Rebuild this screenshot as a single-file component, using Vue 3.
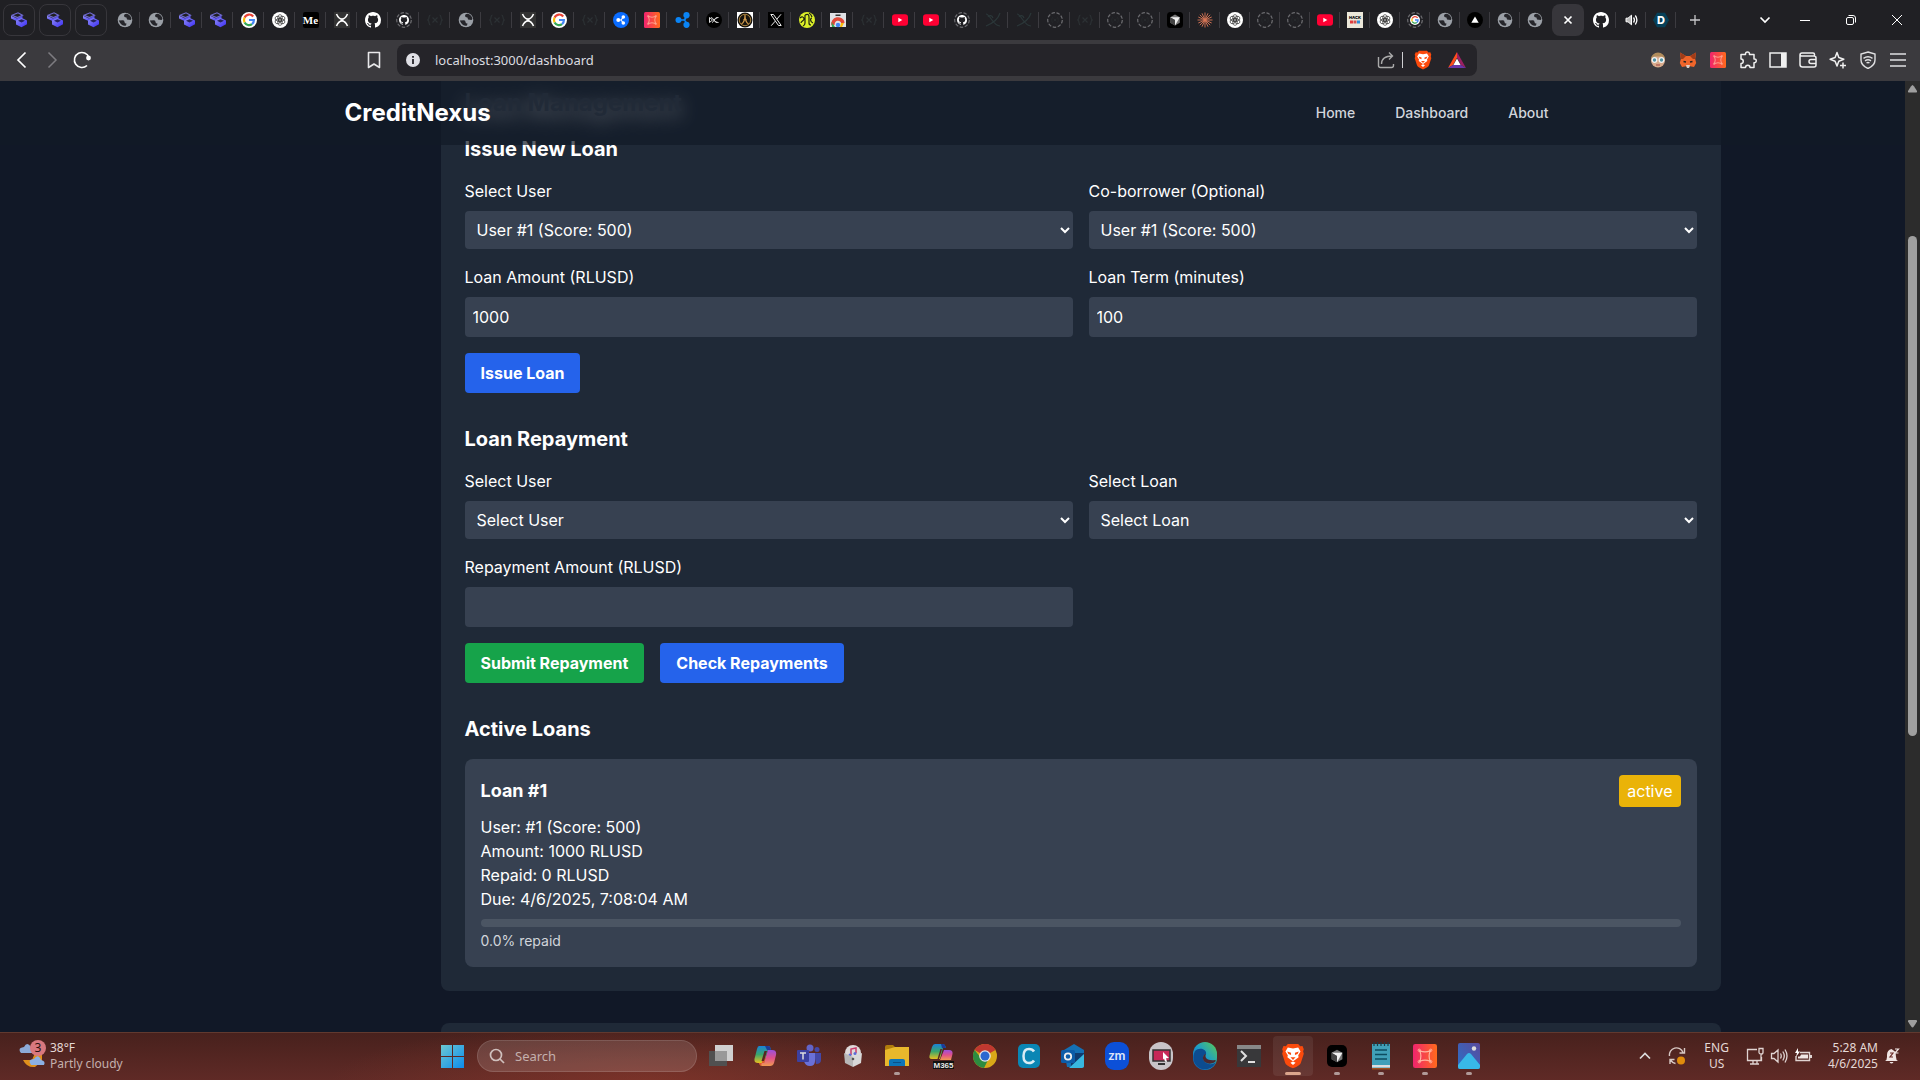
<template>
  <div class="screen">
    <!-- Shared icon shapes -->
    <svg class="sprite" aria-hidden="true">
      <defs>
        <linearGradient id="g-stack" x1="0" y1="0" x2="1" y2="1">
          <stop offset="0" stop-color="#8f8cf5" />
          <stop offset="1" stop-color="#3a2cf5" />
        </linearGradient>
        <linearGradient id="g-red" x1="0" y1="0" x2="1" y2="0">
          <stop offset="0" stop-color="#f0246e" />
          <stop offset="1" stop-color="#ff6a1c" />
        </linearGradient>
        <linearGradient id="g-win" x1="0" y1="0" x2="1" y2="1">
          <stop offset="0" stop-color="#6cc8d2" />
          <stop offset="1" stop-color="#0c8cec" />
        </linearGradient>
        <linearGradient id="g-cop1" x1="0" y1="0" x2="0" y2="1">
          <stop offset="0" stop-color="#1a83d8" />
          <stop offset="0.5" stop-color="#3aa66c" />
          <stop offset="1" stop-color="#e8c020" />
        </linearGradient>
        <linearGradient id="g-cop2" x1="0" y1="0" x2="0" y2="1">
          <stop offset="0" stop-color="#9a50dc" />
          <stop offset="0.5" stop-color="#e0508c" />
          <stop offset="1" stop-color="#f09a50" />
        </linearGradient>
        <linearGradient id="g-edge" x1="0" y1="1" x2="1" y2="0">
          <stop offset="0" stop-color="#0a5cb8" />
          <stop offset="0.5" stop-color="#1c9cc8" />
          <stop offset="1" stop-color="#5ccc50" />
        </linearGradient>
        <linearGradient id="g-photo" x1="0" y1="1" x2="1" y2="0">
          <stop offset="0" stop-color="#2a70c8" />
          <stop offset="1" stop-color="#5a4a9c" />
        </linearGradient>
      </defs>

      <symbol id="stack" viewBox="0 0 16 16">
        <path d="M1 3.200 7 .8l4.500 2.400-5 2.400z" fill="none" stroke="#6f6bd0" stroke-width="1.200" />
        <path d="M0 3.800l6 2.700 5.500-2.700v2.200L6.500 9.500 0 6.600z" fill="url(#g-stack)" />
        <path d="M5 8.600l5.500-2.800L16 8.600v3.600L10.500 15.200 5 12.500z" fill="url(#g-stack)" />
        <path d="M7 8.800l3.500-1.600L14 8.800l-3.500 1.700z" fill="#25225c" />
      </symbol>
      <symbol id="globe" viewBox="0 0 16 16">
        <circle cx="8" cy="8" r="7.300" fill="#9a9fa6" />
        <path d="M1.800 8.500 6 8.300q1.500.2 1.500 1.700t2 1.500l-.5 2q-2 .8-4-.5T1.800 8.500zM9.500 1.800q-2.500.2-2.500 2T9.500 5.500l.5 2 3.500.5q1.200-.5.8-2-1.200-3.500-4.800-4.200z" fill="#25252a" />
      </symbol>
      <symbol id="google" viewBox="0 0 16 16">
        <circle cx="8" cy="8" r="8" fill="#fff" />
        <path d="M12.200 4.500A5 5 0 0 0 3.600 5.600" fill="none" stroke="#ea4335" stroke-width="2.200" />
        <path d="M3.600 5.600a5 5 0 0 0 0 4.800" fill="none" stroke="#fbbc05" stroke-width="2.200" />
        <path d="M3.600 10.400a5 5 0 0 0 7.400 1.700" fill="none" stroke="#34a853" stroke-width="2.200" />
        <path d="M8 8h4.900a5 5 0 0 1-1.900 4.100" fill="none" stroke="#4285f4" stroke-width="2.200" />
      </symbol>
      <symbol id="gpt" viewBox="0 0 16 16">
        <circle cx="8" cy="8" r="8" fill="#fff" />
        <g fill="none" stroke="#333" stroke-width=".7">
          <ellipse cx="8" cy="6" rx="2.300" ry="3.400" />
          <ellipse cx="8" cy="6" rx="2.300" ry="3.400" transform="rotate(60 8 8)" />
          <ellipse cx="8" cy="6" rx="2.300" ry="3.400" transform="rotate(120 8 8)" />
          <ellipse cx="8" cy="6" rx="2.300" ry="3.400" transform="rotate(180 8 8)" />
          <ellipse cx="8" cy="6" rx="2.300" ry="3.400" transform="rotate(240 8 8)" />
          <ellipse cx="8" cy="6" rx="2.300" ry="3.400" transform="rotate(300 8 8)" />
        </g>
      </symbol>
      <symbol id="medium" viewBox="0 0 16 16">
        <rect width="16" height="16" rx="2" fill="#000" />
      </symbol>
      <symbol id="xapp" viewBox="0 0 16 16">
        <rect width="16" height="16" fill="#333" />
        <path d="M2.500 2C4 5.500 6 7 8 7s4-1.500 5.500-5M2.500 14C4 10.500 6 9 8 9s4 1.500 5.500 5M6.500 8h3" fill="none" stroke="#fff" stroke-width="1.600" />
      </symbol>
      <symbol id="github" viewBox="0 0 16 16">
        <path fill="#fff" d="M8 0C3.580 0 0 3.580 0 8c0 3.540 2.290 6.530 5.470 7.590.4.070.55-.17.55-.38 0-.19-.01-.82-.01-1.490-2.010.37-2.530-.49-2.690-.94-.09-.23-.48-.94-.82-1.130-.28-.15-.68-.52-.01-.53.63-.01 1.080.58 1.230.82.72 1.210 1.870.87 2.330.66.07-.52.28-.87.51-1.070-1.780-.2-3.640-.89-3.640-3.950 0-.87.31-1.590.82-2.150-.08-.2-.36-1.020.08-2.120 0 0 .67-.21 2.200.82.64-.18 1.320-.27 2-.27s1.360.09 2 .27c1.530-1.040 2.200-.82 2.200-.82.44 1.100.16 1.920.08 2.120.51.56.82 1.270.82 2.150 0 3.070-1.870 3.750-3.650 3.950.29.25.54.73.54 1.480 0 1.070-.01 1.930-.01 2.200 0 .21.15.46.55.38A8 8 0 0 0 16 8c0-4.420-3.580-8-8-8z" />
      </symbol>
      <symbol id="dash" viewBox="0 0 16 16">
        <circle cx="8" cy="8" r="7.300" fill="none" stroke="#6c6c70" stroke-width="1.200" stroke-dasharray="3.500 1.600" />
      </symbol>
      <symbol id="github-dash" viewBox="0 0 16 16">
        <use href="#dash" width="16" height="16" />
        <use href="#github" x="3" y="3" width="10" height="10" />
      </symbol>
      <symbol id="google-dash" viewBox="0 0 16 16">
        <use href="#dash" width="16" height="16" />
        <use href="#google" x="3" y="3" width="10" height="10" />
      </symbol>
      <symbol id="braces" viewBox="0 0 16 16">
        <path d="M3.500 3C1 3 3 7 .8 8 3 9 1 13 3.500 13M12.500 3c2.500 0 .5 4 2.700 5-2.200 1-.2 5-2.700 5M5.500 5.500l5 5M10.500 5.500l-5 5" fill="none" stroke="#2c3134" stroke-width="1.200" />
      </symbol>
      <symbol id="braces-dash" viewBox="0 0 16 16">
        <use href="#dash" width="16" height="16" />
        <use href="#braces" x="4" y="4" width="8" height="8" />
      </symbol>
      <symbol id="curve" viewBox="0 0 16 16">
        <path d="M1 2c4 0 7 12 14 12M1 14C6 12 13 8 15 1M3 5c1-2 4-2 5 1" fill="none" stroke="#2b3739" stroke-width="1.200" />
      </symbol>
      <symbol id="ripple-round" viewBox="0 0 16 16">
        <circle cx="8" cy="8" r="8" fill="#0a6cff" />
        <g fill="#fff"><circle cx="5.300" cy="8" r="2" /><circle cx="10.300" cy="5" r="1.800" /><circle cx="10.300" cy="11" r="1.800" /></g>
        <path d="M5 8h3l2.300-3M8 8l2.300 3" fill="none" stroke="#fff" stroke-width="1.200" />
      </symbol>
      <symbol id="ripple" viewBox="0 0 16 16">
        <g fill="#0a84f5"><circle cx="3.500" cy="8" r="3" /><circle cx="11.500" cy="3.200" r="3.100" /><circle cx="11.500" cy="12.800" r="3.100" /></g>
        <path d="M3 8h5.500c2 0 2.500-2 3-4M8.500 8c2 0 2.500 2 3 4" fill="none" stroke="#0a84f5" stroke-width="1.700" />
      </symbol>
      <symbol id="redframe" viewBox="0 0 16 16">
        <rect width="16" height="16" rx="1.500" fill="url(#g-red)" />
        <path d="M4.500 4.500Q8 6 11.500 4.500 10 8 11.500 11.500 8 10 4.500 11.500 6 8 4.500 4.500z" fill="none" stroke="#ffb4a0" stroke-width=".8" />
        <g fill="none" stroke="#ffb4a0" stroke-width=".6"><circle cx="4.200" cy="4.200" r=".8" /><circle cx="11.800" cy="4.200" r=".8" /><circle cx="4.200" cy="11.800" r=".8" /><circle cx="11.800" cy="11.800" r=".8" /></g>
      </symbol>
      <symbol id="blackx" viewBox="0 0 16 16">
        <circle cx="8" cy="8" r="8" fill="#000" />
        <path d="M3.500 5.500v5l3-2.500zM12.500 5.500C10 5.500 9 7 8.500 8s1.500 2.500 4 2.500M5 5.500C7.500 5.500 8 10.500 11 10.500M6 10.500c2 0 2-5 5.500-5" fill="none" stroke="#ddd" stroke-width="1" />
      </symbol>
      <symbol id="gold" viewBox="0 0 16 16">
        <path fill="#fff" d="M0 0h16v16H0z" />
        <circle cx="8" cy="8" r="7.500" fill="#16130e" />
        <circle cx="8" cy="8" r="5.700" fill="none" stroke="#a8803c" />
        <path d="M4.500 12Q8 10 8 3q0 7 3.500 9M7 7v3M9 7v3" fill="none" stroke="#d09a4c" stroke-width="1.200" />
      </symbol>
      <symbol id="twx" viewBox="0 0 16 16">
        <path fill="#000" d="M0 0h16v16H0z" />
        <path d="M2.800 2.500h2.700l7.700 11h-2.700zM13 2.300 8.800 7.200M7.200 9.200 3.200 13.700" fill="none" stroke="#eee" stroke-width="1" />
      </symbol>
      <symbol id="yellow" viewBox="0 0 16 16">
        <circle cx="8" cy="8" r="8" fill="#dcf028" />
        <path d="M1 6c2-2 4-1 4 1s-3 2-3 4M6 3v8q0 2.500-2 3M6 3q4-2 4 2v6q0 2 2 2M10 1q2 1 3 4M13 6c-2 0-2 4 1 5" fill="none" stroke="#1c2012" stroke-width="1.200" />
      </symbol>
      <symbol id="store" viewBox="0 0 16 16">
        <path fill="#dfe1e5" d="M0 1h16v14H0z" />
        <path fill="#333" d="M5.500 2.500h5v1.500h-5z" />
        <path d="M3 13a5 5 0 0 1 10-2" fill="none" stroke="#e04838" stroke-width="3.500" />
        <path d="M1.500 10 5 15H2z" fill="#34a853" /><path d="M11 11h3l-2 4h-2z" fill="#fbbc05" />
        <circle cx="8" cy="13" r="2.200" fill="#4285f4" />
      </symbol>
      <symbol id="yt" viewBox="0 0 16 16">
        <rect y="2.300" width="16" height="11.400" rx="3" fill="#ff0033" />
        <path d="M6.300 5.800v4.400l4-2.200z" fill="#fff" />
      </symbol>
      <symbol id="cursorapp" viewBox="0 0 16 16">
        <rect width="16" height="16" rx="3.500" fill="#000" />
        <path d="M8 2.500l4.800 2.700v5.600L8 13.500l-4.800-2.700V5.200z" fill="#777" />
        <path d="M3.200 5.200h9.600L8 13.500V8z" fill="#f0f0f0" />
        <path d="M3.200 5.200 8 8v5.500l-4.800-2.700z" fill="#444" />
      </symbol>
      <symbol id="claude" viewBox="0 0 16 16">
        <path d="M8 .5v15M.5 8h15M2.800 2.800l10.400 10.400M13.200 2.800 2.800 13.200M5 1.300l6 13.400M11 1.300 5 14.700M1.300 5l13.400 6M14.700 5 1.300 11" stroke="#d97757" stroke-width=".9" />
      </symbol>
      <symbol id="hack" viewBox="0 0 16 16">
        <path fill="#ece8da" d="M0 0h16v16H0z" />
        <path d="M3 8.500h3v3H3z" fill="#e03c3c" /><path d="M6.500 8.500h3v3h-3z" fill="#d05050" /><path d="M10 8.500h3v3h-3z" fill="#2c8cd8" />
      </symbol>
      <symbol id="vercel" viewBox="0 0 16 16">
        <circle cx="8" cy="8" r="8" fill="#000" /><path d="M8 4.500l3.700 6.300H4.300z" fill="#fff" />
      </symbol>
      <symbol id="cross" viewBox="0 0 16 16">
        <path d="M4.500 4.500l7 7M11.500 4.500l-7 7" stroke="#fff" stroke-width="1.700" />
      </symbol>
      <symbol id="speaker" viewBox="-2 0 16 16">
        <path d="M1 6.200h2L6.500 3.200v9.600L3 9.800H1z" fill="#bbb" stroke="#fff" />
        <path d="M8.500 5.500q1.800 2.500 0 5M10.300 3.500q3.200 4.500 0 9" fill="none" stroke="#fff" stroke-width="1.300" />
      </symbol>
      <symbol id="dhex" viewBox="0 0 16 16">
        <path d="M4 .8h8L16 8l-4 7.200H4L0 8z" fill="#064058" />
      </symbol>
      <symbol id="brave" viewBox="0 0 18 20">
        <path d="M5 .8h8l1.500 1.700 1.800-.2 1 2.500-.5 1.500.5 2-2.300 7Q14.500 17 9 19.500 3.500 17 3 15.300L.7 8.300l.5-2-.5-1.500 1-2.500 1.800.2z" fill="#fb4a0c" />
        <path d="M9 4.200l4-.7 1.800 3-1.800 3 .3 1.500-2.800 2L9 14l-1.500-1-2.800-2L5 9.500l-1.800-3 1.800-3zM9 14.200l2 1-2 1.800-2-1.800z" fill="#fff" />
        <path d="M4.500 6.500l3 1v1.800L5.500 8.500zM13.500 6.500l-3 1v1.800l2-.8zM7 11h4L9 13z" fill="#fb4a0c" />
      </symbol>
      <symbol id="bat" viewBox="0 0 18 16">
        <path d="M9 0 0 16l5-3L9 5.500z" fill="#ff4c1c" /><path d="M9 0v5.500l4 7.500 5 3z" fill="#9c1f63" /><path d="M0 16h18l-5-3H5z" fill="#6a36a8" />
        <path d="M9 6.500 12.600 13H5.400z" fill="#fff" />
      </symbol>
    </svg>

    <header class="browser">
      <div class="tab-strip">
        <div class="pins">
          <button v-for="n in 3" :key="n" class="pinned" :aria-label="'Pinned tab ' + n">
            <svg width="16" height="16"><use href="#stack" /></svg>
          </button>
        </div>
        <div class="tabs">
          <button v-for="(icon, i) in tabs" :key="i" class="tab" :aria-label="'Tab ' + (i + 1)">
            <svg width="16" height="16"><use :href="'#' + icon" /></svg>
            <span v-if="letters[icon]" :class="['letters', icon]">{{ letters[icon] }}</span>
          </button>
        </div>
        <div class="tabs narrow">
          <button v-for="(icon, i) in narrowTabs" :key="i" class="tab" :aria-label="icon">
            <svg width="16" height="16"><use :href="'#' + icon" /></svg>
            <span v-if="letters[icon]" :class="['letters', icon]">{{ letters[icon] }}</span>
          </button>
        </div>
        <button class="pinned current" aria-label="Close tab"><svg width="16" height="16"><use href="#cross" /></svg></button>
        <div class="tabs narrow last">
          <button v-for="icon in ['github', 'speaker', 'dhex']" :key="icon" class="tab" :aria-label="icon">
            <svg width="16" height="16"><use :href="'#' + icon" /></svg>
            <span v-if="letters[icon]" :class="['letters', icon]">{{ letters[icon] }}</span>
          </button>
        </div>
        <button class="tab new-tab" aria-label="New tab">
          <svg width="16" height="16" stroke="#c8c8ca" stroke-width="1.300"><path d="M8 3v10M3 8h10" /></svg>
        </button>
        <div class="window-controls">
          <button class="search-tabs" aria-label="Search tabs"><svg width="16" height="16" fill="none" stroke="#fff" stroke-width="1.700"><path d="M3.500 5.500 8 10l4.500-4.500" /></svg></button>
          <button aria-label="Minimize"><svg width="16" height="16" stroke="#fff"><path d="M3 8.500h10" /></svg></button>
          <button aria-label="Restore"><svg width="16" height="16" fill="none" stroke="#fff"><rect x="3.500" y="5.500" width="7" height="7" rx="1.500" /><path d="M5.500 3.500h4.500q2.500 0 2.500 2.500v4.500" /></svg></button>
          <button aria-label="Close"><svg width="16" height="16" stroke="#fff"><path d="M3 3l10 10M13 3 3 13" /></svg></button>
        </div>
      </div>

      <div class="toolbar">
        <div class="nav-buttons">
          <button aria-label="Back"><svg width="20" height="20" fill="none" stroke="#fff" stroke-width="1.700"><path d="M13.500 2.500 6 10l7.500 7.500" /></svg></button>
          <button aria-label="Forward"><svg width="20" height="20" fill="none" stroke="#7d7c80" stroke-width="1.500"><path d="M6.500 2.500 14 10l-7.500 7.500" /></svg></button>
          <button aria-label="Reload"><svg width="20" height="20" fill="none" stroke="#fff" stroke-width="1.600"><path d="M17 7.500A7.500 7.500 0 1 0 15 15.500" /><circle cx="16.500" cy="8" r="1.600" fill="#fff" /></svg></button>
        </div>
        <button class="bookmark" aria-label="Bookmark"><svg width="20" height="20" fill="none" stroke="#e8e8ea" stroke-width="1.600"><path d="M4.500 2.500h11v15L10 14l-5.500 3.500z" stroke-linejoin="round" /></svg></button>
        <div class="address">
          <svg width="16" height="16"><circle cx="8" cy="8" r="7" fill="#e0e0e6" /><path d="M8 4v1.800M8 7v5" stroke="#252429" stroke-width="1.800" /></svg>
          <input v-model="url" aria-label="Address" spellcheck="false" />
          <svg width="18" height="18" fill="none" stroke="#aaa" stroke-width="1.400"><path d="M1.500 6v8.500q0 2 2 2h11q2 0 2-2V13M4.500 13c0-5 4-8 11-8M12 1.500 15.500 5 12 8.500" /></svg>
          <span class="rule"></span>
          <svg class="shield" width="18" height="20"><use href="#brave" /></svg>
          <svg width="18" height="16"><use href="#bat" /></svg>
        </div>
        <div class="extensions">
          <button aria-label="Profile extension"><svg width="18" height="18"><circle cx="9" cy="9.500" r="7" fill="#d8ab8c" /><path d="M2 8a7 6.500 0 0 1 14 0L13 5.500H5z" fill="#b08c5c" /><g fill="#4e93a5" stroke="#f2f2f2" stroke-width="1.300"><circle cx="5.500" cy="9" r="2.300" /><circle cx="12.500" cy="9" r="2.300" /></g><path d="M7 14h4" stroke="#a04040" /></svg></button>
          <button aria-label="Wallet fox"><svg width="18" height="18"><path d="M1 1.500 7 5h4l6-3.500-.8 6.500 1 4-2.200 4-4-.8L9.800 17H8.200L7 15.200 3 16 .8 12l1-4z" fill="#f0652a" /><path d="M1 1.500 7 5 4 8H2zM17 1.500 11 5l3 3h2z" fill="#a03c18" /><path d="M4.500 10.500 7 11M13.500 10.500 11 11" stroke="#222" stroke-width="1.400" /><path d="M7 14h4l-1 3H8z" fill="#d8d0cc" /></svg></button>
          <button aria-label="Frame extension"><svg width="16" height="16"><use href="#redframe" /></svg></button>
          <button aria-label="Extensions"><svg width="18" height="18" fill="none" stroke="#f0f0f0" stroke-width="1.500"><path d="M2 3.500h4.500c-.5-3.500 4.500-3.500 4 0H15v4.500c3-.5 3 4 0 3.800v4.700h-4c0-3-4.500-3-4.500 0H2v-4c3 0 3-4.500 0-4.500z" stroke-linejoin="round" /></svg></button>
          <button aria-label="Side panel"><svg width="18" height="16"><rect x="1" y="1" width="16" height="14" fill="none" stroke="#f0f0f0" stroke-width="1.500" /><path d="M12 1h5v14h-5z" fill="#f0f0f0" /></svg></button>
          <button aria-label="Wallet"><svg width="18" height="16" fill="none" stroke="#f0f0f0" stroke-width="1.500"><path d="M15.500 4V2.500q0-1.500-1.500-1.500H3Q1 1 1 3v9.500Q1 15 3.500 15H15q2 0 2-2V6q0-2-2-2H2.500Q1 4 1 2.500" /><path d="M17 7.500h-5q-2 0-2 2t2 2h5" /></svg></button>
          <button aria-label="Leo"><svg width="18" height="18" fill="none" stroke="#f0f0f0" stroke-width="1.500"><path d="M8 1.500 9.800 6.500l5 1.800-5 1.900L8 15l-1.900-4.800-5-1.900 5-1.800z" stroke-linejoin="round" /><path d="M14 11.500v6M11 14.500h6" /></svg></button>
          <button aria-label="VPN"><svg width="18" height="18" fill="none" stroke="#e0e0e2" stroke-width="1.400"><path d="M9 1l7 2v6q0 5.500-7 8.500-7-3-7-8.500V3z" /><path d="M4.500 7.300q4.500-3 9 0M6 9.800q3-2 6 0M7.500 12q1.500-1 3 0" /></svg></button>
          <button aria-label="Menu"><svg width="18" height="16" stroke="#e0e0e2" stroke-width="1.700"><path d="M1 2h16M1 8h16M1 14h16" /></svg></button>
        </div>
      </div>
    </header>

    <div class="viewport">
      <div class="page">
        <nav class="site-nav">
          <div class="site-nav-inner">
            <a href="#" class="brand">CreditNexus</a>
            <div class="links">
              <a href="#">Home</a>
              <a href="#">Dashboard</a>
              <a href="#">About</a>
            </div>
          </div>
        </nav>

        <main class="content">
          <section class="card loans">
            <h2>Loan Management</h2>

            <h3>Issue New Loan</h3>
            <form @submit.prevent>
              <div class="grid">
                <div>
                  <label for="issue-user">Select User</label>
                  <select id="issue-user"><option>User #1 (Score: 500)</option></select>
                </div>
                <div>
                  <label for="co-borrower">Co-borrower (Optional)</label>
                  <select id="co-borrower"><option>User #1 (Score: 500)</option></select>
                </div>
                <div>
                  <label for="amount">Loan Amount (RLUSD)</label>
                  <input id="amount" v-model="amount" type="text" />
                </div>
                <div>
                  <label for="term">Loan Term (minutes)</label>
                  <input id="term" v-model="term" type="text" />
                </div>
              </div>
              <div class="actions">
                <button class="btn blue">Issue Loan</button>
              </div>
            </form>

            <h3>Loan Repayment</h3>
            <form @submit.prevent>
              <div class="grid">
                <div>
                  <label for="repay-user">Select User</label>
                  <select id="repay-user"><option>Select User</option></select>
                </div>
                <div>
                  <label for="repay-loan">Select Loan</label>
                  <select id="repay-loan"><option>Select Loan</option></select>
                </div>
                <div>
                  <label for="repay-amount">Repayment Amount (RLUSD)</label>
                  <input id="repay-amount" v-model="repayAmount" type="text" />
                </div>
              </div>
              <div class="actions">
                <button class="btn green">Submit Repayment</button>
                <button class="btn blue" type="button">Check Repayments</button>
              </div>
            </form>

            <h3>Active Loans</h3>
            <article v-for="loan in loans" :key="loan.id" class="loan">
              <div class="loan-head">
                <h4>Loan #{{ loan.id }}</h4>
                <span class="badge">{{ loan.status }}</span>
              </div>
              <p>User: #{{ loan.user }} (Score: {{ loan.score }})</p>
              <p>Amount: {{ loan.amount }} RLUSD</p>
              <p>Repaid: {{ loan.repaid }} RLUSD</p>
              <p>Due: {{ loan.due }}</p>
              <div class="track"><div class="fill" :style="{ width: percent(loan) + '%' }"></div></div>
              <p class="note">{{ percent(loan) }}% repaid</p>
            </article>
          </section>

          <section class="card next"></section>
        </main>
      </div>
      <div class="scrollbar">
        <svg width="11" height="8"><path d="M5.500 0Q6.500 0 10 6q.5 1.500-1 1.500H2Q.5 7.500 1 6 4.500 0 5.500 0z" fill="#9f9f9f" /></svg>
        <div class="rail"><div class="thumb"></div></div>
        <svg width="11" height="8"><path d="M5.500 7.500Q6.500 7.500 10 1.500 10.500 0 9 0H2Q.5 0 1 1.500 4.500 7.500 5.500 7.500z" fill="#9f9f9f" /></svg>
      </div>
    </div>

    <footer class="taskbar">
      <div class="side">
        <div class="weather">
          <svg width="30" height="30">
            <path d="M5 20h9l3-7 7-1v9l-7 6q-8 1-12-7z" fill="#e0901c" />
            <path d="M3 13q-4-5 3-6 3-6 7 0 5 1 4 6z" fill="#8caad8" />
            <path d="M13 25q-4-6 3-6 4-6 7 1 5 1 3 5z" fill="#8cb0e4" />
            <circle cx="20" cy="8" r="8" fill="#d8787f" />
            <text x="20" y="12" text-anchor="middle" font-family="Noto Sans, sans-serif" font-size="12" fill="#2a1010">3</text>
          </svg>
          <div>38°F<br /><span>Partly cloudy</span></div>
        </div>
      </div>

      <div class="apps">
        <button class="start" aria-label="Start">
          <svg width="23" height="23"><path d="M0 0h11v11H0zM12 0h11v11H12zM0 12h11v11H0zM12 12h11v11H12z" fill="url(#g-win)" /></svg>
        </button>
        <div class="search">
          <svg width="16" height="16" fill="none" stroke="#d0c0bd" stroke-width="1.700"><circle cx="7" cy="7" r="5.500" /><path d="M11 11l4 4" /></svg>
          <input placeholder="Search" aria-label="Search" />
        </div>
        <button class="app" aria-label="Task view">
          <svg width="24" height="24"><path d="M0 7h18v15H0z" fill="#505050" /><path d="M6 1h18v16H6z" fill="#d0d0d0" /><path d="M6 7h12v10H6z" fill="#989898" /></svg>
        </button>
        <button class="app" aria-label="Copilot">
          <svg width="24" height="24" viewBox="0 0 24 24">
            <path d="M6 2h9q2 0 2.500 2L18 6h-3l-4 13H5Q0 19 2 13L4 5q.8-3 2-3z" fill="url(#g-cop1)" />
            <path d="M12 2h3q2 0 2.500 2L18 6h-4z" fill="#1c3c98" />
            <path d="M15 6h4q5 0 4 5l-2 8q-1 3-4 3H9q-2 0-3-3h5z" fill="url(#g-cop2)" />
            <path d="M6 19h5l1.500-5H10L8 22q-1.500-1-2-3z" fill="#e05a2c" />
            <path d="M11.500 7H14l-3 10H8.500z" fill="#552521" />
          </svg>
        </button>
        <button class="app" aria-label="Teams">
          <svg width="24" height="24">
            <circle cx="13" cy="4" r="3.500" fill="#6264c8" /><circle cx="20" cy="5.500" r="2.500" fill="#4448a8" />
            <path d="M17 9h7v7q0 4-5 4z" fill="#4448a8" /><path d="M7 9h11v8q0 5-5 5t-6-5z" fill="#6a70d8" />
            <rect y="6" width="12" height="12" rx="1" fill="#3c40a0" /><path d="M3 9h6M6 9v6.500" stroke="#ddd" stroke-width="1.500" />
          </svg>
        </button>
        <button class="app" aria-label="Music box">
          <svg width="24" height="24">
            <circle cx="12" cy="9" r="8" fill="#dedada" /><path d="M10 11V5l5-1v5" stroke="#c83c6c" stroke-width="1.500" fill="none" /><circle cx="9" cy="11" r="1.500" fill="#5a6cd8" /><circle cx="14" cy="9.500" r="1.500" fill="#5a6cd8" />
            <path d="M3 9l9 4v10l-8-4z" fill="#b8b8b8" /><path d="M21 9l-9 4v10l8-4z" fill="#d8d8d8" /><circle cx="12" cy="15" r="1.300" fill="#555" />
          </svg>
        </button>
        <button class="app open" aria-label="Explorer">
          <svg width="24" height="24"><path d="M0 3q0-2 2-2h6l2 2v5H0z" fill="#b07c0c" /><path d="M0 6l10-3h14v19H0z" fill="#e8b82c" /><path d="M4 22v-5q0-2 2-2h12q2 0 2 2v5z" fill="#0c74b8" /><path d="M8 18.500h8" stroke="#0a5088" /></svg>
        </button>
        <button class="app" aria-label="M365">
          <svg width="26" height="28">
            <path d="M7 2h8q2 0 2.500 2.500L18 6h-3l-3 11H4Q0 17 2 12L4 5q1-3 3-3z" fill="url(#g-cop1)" /><path d="M13 2h2q2 0 2.500 2.500L18 6h-4z" fill="#1c3c98" /><path d="M16 8h5q4 0 3.500 4l-1.500 6H12z" fill="url(#g-cop2)" /><path d="M12.500 7H14l-3 10H9.500z" fill="#552521" />
            <path d="M5 19h21v8H5z" fill="#111" /><text x="15.500" y="26" text-anchor="middle" font-family="Liberation Sans, sans-serif" font-size="8" font-weight="700" fill="#e8e8e8">M365</text>
          </svg>
        </button>
        <button class="app" aria-label="Chrome">
          <svg width="24" height="24"><circle cx="12" cy="12" r="12" fill="#d8a818" /><path d="M12 12 1.600 6A12 12 0 0 1 22.400 6z" fill="#c03830" /><path d="M12 0a12 12 0 0 1 10.400 6H12z" fill="#c03830" /><path d="M1.600 6A12 12 0 0 0 11 24l5-10H8z" fill="#2c8c40" /><circle cx="12" cy="12" r="5.800" fill="#e8e8e8" /><circle cx="12" cy="12" r="4.500" fill="#2c68d0" /></svg>
        </button>
        <button class="app" aria-label="Canvas">
          <svg width="22" height="24"><rect width="22" height="24" rx="5" fill="#0a86b4" /><path d="M16 7.500q-1.500-2.500-5-2.500-5.500 0-5.500 7t5.500 7q3.500 0 5-2.500" fill="none" stroke="#d8ecf4" stroke-width="2.500" /></svg>
        </button>
        <button class="app" aria-label="Outlook">
          <svg width="24" height="26"><path d="M3 7 13 1l10 6v17H6z" fill="#1470b4" /><path d="M10 10h13v5L10 25z" fill="#103c70" /><path d="M23 11v12q0 2-2 2H8z" fill="#38b8e0" /><rect y="7" width="14" height="13" rx="1.500" fill="#0c5ca8" /><circle cx="7" cy="13.500" r="3.200" fill="none" stroke="#eee" stroke-width="1.800" /></svg>
        </button>
        <button class="app" aria-label="Zoom">
          <svg width="24" height="28"><rect width="24" height="28" rx="9" fill="#0c50d8" /><text x="12" y="18" text-anchor="middle" font-family="Lato, sans-serif" font-size="13" font-weight="700" fill="#dce4f8">zm</text></svg>
        </button>
        <button class="app" aria-label="Screen recorder">
          <svg width="24" height="28"><rect width="24" height="28" rx="12" fill="#c8c4c8" /><rect x="4" y="8" width="17" height="11" fill="#c82858" stroke="#333" stroke-width="1.500" /><path d="M9 22h7" stroke="#333" stroke-width="2" /><path d="M14 10l6 6-3 .3L18 20l-2-.5-1-3-1 1z" fill="#fff" /></svg>
        </button>
        <button class="app" aria-label="Edge">
          <svg width="24" height="28"><rect width="24" height="28" rx="12" fill="url(#g-edge)" /><path d="M2 9C6 5 14 7 13 12c-3 1-4 4-2 7 3 4 9 4 12 1-3 8-13 9-18 5-6-5-5-12-3-16z" fill="#0c4c90" /><path d="M13 12c-2 4 2 7 9 6 1 0 1 1 0 2-6 4-13 0-12-5 .5-2 1.500-3 3-3z" fill="#4a2830" /></svg>
        </button>
        <button class="app" aria-label="Terminal">
          <svg width="24" height="22"><path d="M0 0h24v22H0z" fill="#38383a" /><path d="M0 0h24v4H0z" fill="#888" /><path d="M4 6l5 5-5 5M11 17h7" fill="none" stroke="#e0e0e0" stroke-width="2" /></svg>
        </button>
        <button class="app open focused" aria-label="Brave"><svg width="24" height="26"><use href="#brave" /></svg></button>
        <button class="app open" aria-label="Cursor"><svg width="20" height="22" viewBox="0 0 20 22"><rect width="20" height="22" rx="5" fill="#000" /><use href="#cursorapp" x="1" y="2" width="18" height="18" /></svg></button>
        <button class="app open" aria-label="Notepad">
          <svg width="20" height="28"><path d="M1 2h18v24H1z" fill="#40a0b8" /><path d="M1 23h18v2.500H1z" fill="#ddd" /><path d="M1 26h18v1.500H1z" fill="#a0501c" /><path d="M4 8h12M4 12.500h12M4 17h12" stroke="#0c4c60" stroke-width="1.700" /><path d="M3 0v4M6.500 0v4M10 0v4M13.500 0v4M17 0v4" stroke="#183c48" stroke-width="1.200" /></svg>
        </button>
        <button class="app open" aria-label="Frame"><svg width="24" height="24"><use href="#redframe" /></svg></button>
        <button class="app open" aria-label="Photos">
          <svg width="22" height="26"><rect width="22" height="26" rx="2" fill="url(#g-photo)" /><path d="M0 22 9 11q2-2 4 0l9 11v2q0 2-2 2H2q-2 0-2-2z" fill="#38b8e8" /><circle cx="16" cy="5.500" r="2.200" fill="#ddd" /></svg>
        </button>
      </div>

      <div class="side tray">
        <button aria-label="Hidden icons"><svg width="16" height="16" fill="none" stroke="#ddd" stroke-width="1.700"><path d="M3 10.500 8 5.500l5 5" /></svg></button>
        <button aria-label="Update"><svg width="18" height="18" fill="none" stroke="#d8c8c4" stroke-width="1.400"><path d="M1.500 9A7 7 0 0 1 15 5.500M16.500 1v5h-5M2 17v-4.500h4.500M2.500 13q2 3 5 3.500" /><circle cx="13" cy="13.500" r="4" fill="#e08c0c" stroke="none" /></svg></button>
        <div class="lang">ENG<br />US</div>
        <button class="status" aria-label="Quick settings">
          <svg width="18" height="18" fill="none" stroke="#e0d4d2" stroke-width="1.300"><path d="M11 2.500H1.500v11h14V10M4 17h9M7 14v3M11 14v3M13 1.500h4v4q0 1.500-2 1.500t-2-1.500zM15 7v6" /></svg>
          <svg width="18" height="18" fill="none" stroke="#e0d4d2" stroke-width="1.300"><path d="M1.500 6.500h2.500L8 3v12l-4-3.500H1.500zM10.500 6.500q1.500 2.500 0 5M12.800 4.500q3 4.500 0 9M15 2.500q4 6.500 0 13" /></svg>
          <svg width="18" height="18"><path d="M6 5.500h9.500v8H2V9" fill="none" stroke="#e0d4d2" stroke-width="1.400" /><path d="M7 7.500h7v4H4V9.500h2z" fill="#f0e6e4" /><path d="M16 8h2v3h-2z" fill="#e0d4d2" /><path d="M4 1 1 6h2l-1 4 4-5.500H4z" fill="#fff" /></svg>
        </button>
        <div class="clock">5:28 AM<br />4/6/2025</div>
        <button class="bell" aria-label="Notifications"><svg width="16" height="18"><path d="M1 14q2-1 2-4V8q0-5 4.500-6l4 3 .5 5q0 3 2 4zM5.500 15h4q-2 3-4 0z" fill="#f0e6e4" /><path d="M6 6h3L6 10h3" fill="none" stroke="#6a2a26" stroke-width="1.200" /><path d="M11 2h3.500L11 6h3.500" fill="none" stroke="#f0e6e4" stroke-width="1.200" /></svg></button>
      </div>
    </footer>
  </div>
</template>

<script setup>
import { ref } from 'vue'

const url = ref('localhost:3000/dashboard')

const tabs = [
  'globe', 'globe', 'stack', 'stack', 'google', 'gpt', 'medium', 'xapp', 'github', 'github-dash',
  'braces', 'globe', 'braces', 'xapp', 'google', 'braces', 'ripple-round', 'redframe', 'ripple', 'blackx',
  'gold', 'twx', 'yellow', 'store', 'braces', 'yt', 'yt', 'github-dash', 'curve', 'curve', 'braces-dash'
]
const narrowTabs = [
  'braces', 'braces-dash', 'braces-dash', 'cursorapp', 'claude', 'gpt', 'braces-dash', 'braces-dash',
  'yt', 'hack', 'gpt', 'google-dash', 'globe', 'vercel', 'globe', 'globe'
]
// favicons that carry lettering on top of their shape
const letters = { medium: 'Me', hack: 'HACK', dhex: 'D' }

const amount = ref('1000')
const term = ref('100')
const repayAmount = ref('')

const loans = ref([
  { id: 1, status: 'active', user: 1, score: 500, amount: 1000, repaid: 0, due: '4/6/2025, 7:08:04 AM' }
])

function percent(loan) {
  return ((loan.repaid / loan.amount) * 100).toFixed(1)
}
</script>

<style>
body {
  margin: 0;
  background: #111827;
}
</style>

<style scoped>
.screen {
  display: flex;
  flex-direction: column;
  height: 100vh;
  overflow: hidden;
  font-family: Inter, "Liberation Sans", sans-serif;
  font-size: 16px;
  line-height: 24px;
  color: #fff;
}

.screen *,
.screen *::after {
  box-sizing: border-box;
}

.sprite {
  position: absolute;
  width: 0;
  height: 0;
}

button {
  padding: 0;
  border: 0;
  background: none;
  color: inherit;
  font: inherit;
  cursor: pointer;
}

button svg,
.address svg {
  display: block;
  flex: none;
}

/* Browser chrome */
.browser {
  flex: none;
  background: #3b3a3e;
}

.tab-strip {
  display: flex;
  align-items: center;
  height: 40px;
  padding-left: 3px;
  background: #202024;
}

.pins {
  display: flex;
  gap: 4px;
  margin-right: 2px;
}

.pinned {
  display: flex;
  align-items: center;
  justify-content: center;
  flex: none;
  width: 32px;
  height: 32px;
  border: 1px solid #37363b;
  border-radius: 8px;
}

.pinned.current {
  margin: 0 2px;
  border: 0;
  background: #37363b;
}

.tabs {
  display: flex;
}

.tab {
  position: relative;
  display: flex;
  align-items: center;
  justify-content: center;
  flex: none;
  width: 31px;
  height: 32px;
}

.narrow .tab {
  width: 30px;
}

.tabs .tab::after {
  content: "";
  position: absolute;
  top: 8px;
  right: 0;
  width: 1px;
  height: 16px;
  background: #3c3b40;
}

.narrow:not(.last) .tab:last-child::after {
  display: none;
}

.new-tab {
  margin-left: 3px;
}

/* Lettering laid over a favicon */
.letters {
  position: absolute;
  inset: 0;
  display: flex;
  align-items: center;
  justify-content: center;
  line-height: 16px;
}

.letters.medium {
  font-family: "Liberation Serif", serif;
  font-size: 11px;
  font-weight: 700;
}

.letters.hack {
  padding-bottom: 5px;
  color: #111;
  font-size: 4px;
  font-weight: 900;
}

.letters.dhex {
  font-size: 11px;
  font-weight: 800;
}

.window-controls {
  display: flex;
  margin-left: auto;
}

.window-controls button {
  display: flex;
  align-items: center;
  justify-content: center;
  width: 46px;
  height: 40px;
}

.window-controls .search-tabs {
  width: 34px;
}

.toolbar {
  display: flex;
  align-items: center;
  height: 41px;
  padding: 0 12px 1px;
}

.nav-buttons {
  display: flex;
  gap: 10px;
}

.bookmark {
  margin: 0 13px 0 272px;
}

.address {
  display: flex;
  align-items: center;
  flex: 1;
  height: 32px;
  padding: 0 11px 0 8px;
  border-radius: 8px;
  background: #252429;
}

.address input {
  flex: 1;
  height: 32px;
  padding: 0 14px;
  border: 0;
  outline: 0;
  background: none;
  color: #dcdce0;
  font: 13px "Noto Sans", "Open Sans", sans-serif;
}

.rule {
  width: 1px;
  height: 16px;
  margin: 0 11px 0 7px;
  background: #cfcfd2;
}

.shield {
  margin-right: 16px;
}

.extensions {
  display: flex;
  margin-left: 166px;
  margin-right: -5px;
}

.extensions button {
  display: flex;
  align-items: center;
  justify-content: center;
  width: 30px;
  height: 32px;
}

/* Web page */
.viewport {
  display: flex;
  flex: 1;
  min-height: 0;
}

.page {
  position: relative;
  flex: 1;
  overflow: hidden;
  background: #111827;
}

.site-nav {
  position: absolute;
  top: 0;
  left: 0;
  right: 0;
  z-index: 1;
  background: rgba(17, 26, 38, 0.7);
}

.site-nav-inner {
  display: flex;
  align-items: center;
  justify-content: space-between;
  max-width: 1280px;
  height: 64px;
  margin: 0 auto;
  padding: 0 32px;
}

.brand {
  color: #fff;
  font-size: 24px;
  font-weight: 700;
  text-decoration: none;
}

.links {
  display: flex;
  gap: 16px;
}

.links a {
  padding: 8px 12px;
  color: #d1d5db;
  font-size: 14px;
  font-weight: 500;
  line-height: 20px;
  text-decoration: none;
}

.content {
  padding-left: 256px;
}

.card {
  max-width: 1280px;
  margin: 0 auto;
  border-radius: 8px;
  background: #1f2937;
}

.loans {
  padding: 6px 24px 24px;
  border-radius: 0 0 8px 8px;
}

.next {
  height: 200px;
  margin-top: 32px;
}

h2,
h3,
h4,
p {
  margin: 0;
}

h2 {
  margin-bottom: 16px;
  color: #465060;
  font-size: 24px;
  font-weight: 700;
  line-height: 32px;
  text-shadow: 0 6px 16px rgba(255, 255, 255, 0.6), 0 6px 24px rgba(255, 255, 255, 0.5);
}

h3 {
  margin-bottom: 16px;
  font-size: 20px;
  font-weight: 700;
  line-height: 28px;
}

form {
  margin-bottom: 32px;
}

.grid {
  display: grid;
  grid-template-columns: 1fr 1fr;
  gap: 16px;
}

label {
  display: block;
  margin-bottom: 8px;
}

.grid select,
.grid input {
  display: block;
  width: 100%;
  height: 40px;
  padding: 8px;
  border: 0;
  border-radius: 4px;
  background: #374151;
  color: #fff;
  font: inherit;
}

.grid select {
  height: 38px;
}

.actions {
  display: flex;
  gap: 16px;
  margin-top: 16px;
}

.btn {
  height: 40px;
  padding: 0 16px;
  border-radius: 4px;
  font-weight: 700;
}

.blue {
  background: #2563eb;
}

.green {
  background: #16a34a;
}

.loan {
  padding: 16px;
  border-radius: 8px;
  background: #374151;
}

.loan-head {
  display: flex;
  align-items: center;
  justify-content: space-between;
  margin-bottom: 8px;
}

h4 {
  font-size: 18px;
  font-weight: 700;
}

.badge {
  padding: 4px 8px;
  border-radius: 4px;
  background: #eab308;
}

.track {
  height: 8px;
  margin: 8px 0 4px;
  border-radius: 4px;
  background: #4b5563;
  overflow: hidden;
}

.fill {
  height: 100%;
  background: #22c55e;
}

.note {
  color: #d1d5db;
  font-size: 14px;
  line-height: 20px;
}

.scrollbar {
  display: flex;
  flex-direction: column;
  align-items: center;
  width: 15px;
  padding: 4px 0;
  background: #2c2c2c;
}

.rail {
  display: flex;
  flex-direction: column;
  flex: 1;
}

.rail::before {
  content: "";
  flex: 143 0 0;
}

.rail::after {
  content: "";
  flex: 284 0 0;
}

.thumb {
  flex: 500 0 0;
  width: 9px;
  border-radius: 5px;
  background: #9f9f9f;
}

/* Taskbar */
.taskbar {
  display: flex;
  flex: none;
  height: 48px;
  padding-bottom: 1px;
  border-top: 1px solid #61392f;
  background:
    radial-gradient(ellipse 320px 60px at 650px 48px, rgba(150, 60, 45, 0.5), transparent),
    linear-gradient(#48211d, #5f2a26);
  color: #e4d8d6;
  font-family: "Noto Sans", sans-serif;
  font-size: 12px;
  line-height: 16px;
}

.side {
  display: flex;
  align-items: center;
  flex: 1;
  min-width: 0;
  padding: 0 20px 0 18px;
}

.weather {
  display: flex;
  gap: 2px;
}

.weather div,
.weather svg {
  flex: none;
}

.weather span {
  color: #c4b0ad;
}

.apps {
  display: flex;
  align-items: center;
  margin-left: 12px;
}

.start {
  margin-right: 13px;
}

.search {
  display: flex;
  align-items: center;
  gap: 10px;
  width: 220px;
  height: 32px;
  margin-right: 2px;
  padding-left: 11px;
  border: 1px solid rgba(255, 255, 255, 0.12);
  border-radius: 16px;
  background: rgba(255, 255, 255, 0.13);
}

.search input {
  width: 140px;
  padding: 0;
  border: 0;
  outline: 0;
  background: none;
  color: #fff;
  font: 13px "Noto Sans", sans-serif;
}

.search input::placeholder {
  color: #c4b0ad;
}

.app {
  position: relative;
  display: flex;
  align-items: center;
  justify-content: center;
  width: 40px;
  height: 40px;
  margin: 0 2px;
  border-radius: 4px;
}

.open::after {
  content: "";
  position: absolute;
  bottom: 1px;
  left: 17px;
  width: 6px;
  height: 3px;
  border-radius: 2px;
  background: #b09a98;
}

.focused {
  background: rgba(255, 255, 255, 0.07);
}

.focused::after {
  left: 12px;
  width: 16px;
  background: #dba58c;
}

.tray {
  justify-content: flex-end;
}

.lang {
  margin: 0 0 0 18px;
  text-align: center;
}

.tray button + button {
  margin-left: 15px;
}

.tray .status {
  display: flex;
  gap: 6px;
  margin-left: 17px;
}

.clock {
  margin-left: 16px;
  text-align: right;
}

.tray .bell {
  margin-left: 6px;
}
</style>
